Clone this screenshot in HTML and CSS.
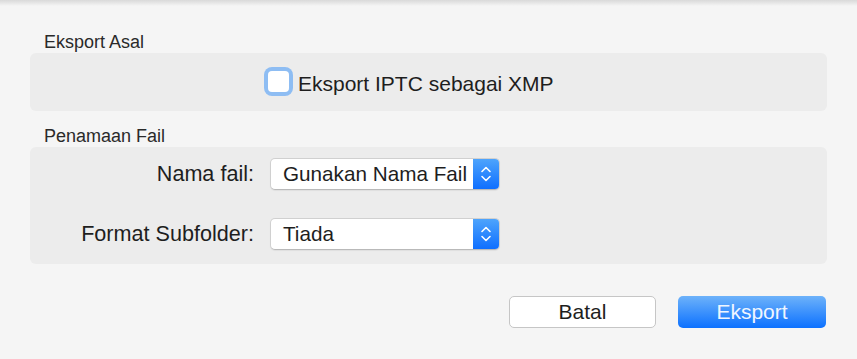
FILE: index.html
```html
<!DOCTYPE html>
<html lang="ms">
<head>
    <meta charset="UTF-8">
    <meta name="viewport" content="width=device-width, initial-scale=1.0">
    <title>Eksport</title>
    <link rel="stylesheet" href="styles.css">
</head>
<body>
    <div class="bar-shadow"></div>
    <div class="sheet">
        <div class="section-title first">Eksport Asal</div>
        <div class="group group-check">
            <label class="check">
                <span class="check-ring"><span class="check-box"></span></span>
                <span class="check-text">Eksport IPTC sebagai XMP</span>
            </label>
        </div>

        <div class="section-title">Penamaan Fail</div>
        <div class="group group-form">
            <div class="form-label">Nama fail:</div>
            <div class="popup">
                <span class="popup-value">Gunakan Nama Fail</span>
                <span class="popup-arrows">
                    <svg width="12" height="18" viewBox="0 0 12 18">
                        <path d="M2 6.5 L6 2.5 L10 6.5" fill="none" stroke="#fff" stroke-width="1.6" stroke-linecap="round" stroke-linejoin="round"/>
                        <path d="M2 11.5 L6 15.5 L10 11.5" fill="none" stroke="#fff" stroke-width="1.6" stroke-linecap="round" stroke-linejoin="round"/>
                    </svg>
                </span>
            </div>

            <div class="form-label">Format Subfolder:</div>
            <div class="popup">
                <span class="popup-value">Tiada</span>
                <span class="popup-arrows">
                    <svg width="12" height="18" viewBox="0 0 12 18">
                        <path d="M2 6.5 L6 2.5 L10 6.5" fill="none" stroke="#fff" stroke-width="1.6" stroke-linecap="round" stroke-linejoin="round"/>
                        <path d="M2 11.5 L6 15.5 L10 11.5" fill="none" stroke="#fff" stroke-width="1.6" stroke-linecap="round" stroke-linejoin="round"/>
                    </svg>
                </span>
            </div>
        </div>

        <div class="actions">
            <button class="btn">Batal</button>
            <button class="btn btn-primary">Eksport</button>
        </div>
    </div>
</body>
</html>
```

FILE: styles.css
```css
html, body {
    margin: 0;
    padding: 0;
}

body {
    font-family: "Liberation Sans", Arial, sans-serif;
    background-color: #f5f5f5;
    color: #1e1e1e;
    width: 857px;
    height: 359px;
    overflow: hidden;
}

.bar-shadow {
    height: 6px;
    background: linear-gradient(to bottom, #d9d9d9, #f5f5f5);
}

.sheet {
    padding: 0 30px 0 30px;
}

.section-title {
    font-size: 18px;
    line-height: 20px;
    color: #2a2a2a;
    padding-left: 14px;
    margin-top: 15px;
    margin-bottom: 1px;
}

.section-title.first {
    margin-top: 26px;
}

.group {
    background-color: #ececec;
    border-radius: 6px;
}

.group-check {
    height: 58px;
    box-sizing: border-box;
    padding: 14px 0 0 234px;
}

.check {
    display: flex;
    align-items: flex-start;
}

.check-ring {
    width: 29px;
    height: 29px;
    box-sizing: border-box;
    border-radius: 8px;
    background-color: #8ebdf3;
    display: flex;
    align-items: center;
    justify-content: center;
}

.check-box {
    width: 21px;
    height: 21px;
    border-radius: 4px;
    background-color: #fff;
}

.check-text {
    font-size: 21px;
    line-height: 24px;
    padding-top: 5px;
    margin-left: 5px;
}

.group-form {
    display: grid;
    grid-template-columns: 224px 230px;
    column-gap: 16px;
    row-gap: 28px;
    align-items: center;
    padding: 11px 0 14px 0;
}

.form-label {
    text-align: right;
    font-size: 21.6px;
    line-height: 24px;
}

.popup {
    height: 32px;
    box-sizing: border-box;
    display: flex;
    background-color: #fff;
    border-radius: 5px;
    border: 1px solid #d0d0d0;
    border-bottom-color: #b9b9b9;
    box-shadow: 0 1px 1px rgba(0, 0, 0, 0.06);
    overflow: hidden;
}

.popup-value {
    flex: 1;
    font-size: 20.7px;
    line-height: 30px;
    padding-left: 12px;
    white-space: nowrap;
}

.popup-arrows {
    width: 26px;
    background: linear-gradient(to bottom, #4ea4fc, #0f6fff);
    display: flex;
    align-items: center;
    justify-content: center;
}

.actions {
    display: flex;
    justify-content: flex-end;
    gap: 22px;
    margin-top: 32px;
    padding-right: 1px;
}

.btn {
    width: 147px;
    height: 32px;
    font-family: "Liberation Sans", Arial, sans-serif;
    font-size: 21px;
    color: #1e1e1e;
    background-color: #fff;
    border: 1px solid #c6c6c6;
    border-radius: 5px;
    padding: 0;
}

.btn-primary {
    width: 148px;
    color: #f0f6ff;
    border: none;
    background: linear-gradient(to bottom, #6db2fa, #0c71ff);
}
```
